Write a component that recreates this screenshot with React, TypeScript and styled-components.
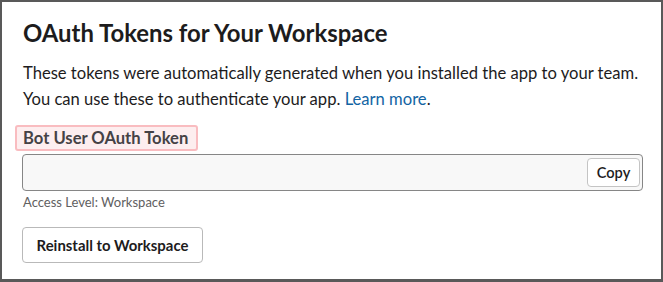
import React from 'react';
import styled, { createGlobalStyle } from 'styled-components';

const GlobalStyle = createGlobalStyle`
  html, body {
    margin: 0;
    padding: 0;
    background: #ffffff;
  }
  body {
    font-family: Lato, 'Noto Sans', sans-serif;
    color: #1d1c1d;
  }
`;

const App = () => {
  return (
    <>
      <GlobalStyle />
      <StyledFrame>
        <StyledTitle>OAuth Tokens for Your Workspace</StyledTitle>
        <StyledText>
          These tokens were automatically generated when you installed the app to your team.
          <br />
          You can use these to authenticate your app. <StyledLink href="#">Learn more</StyledLink>.
        </StyledText>
        <StyledLabel>Bot User OAuth Token</StyledLabel>
        <StyledField>
          <StyledInput readOnly value="" />
          <StyledCopy>Copy</StyledCopy>
        </StyledField>
        <StyledHint>Access Level: Workspace</StyledHint>
        <StyledButton>Reinstall to Workspace</StyledButton>
      </StyledFrame>
    </>
  );
};

const StyledFrame = styled.div`
  box-sizing: border-box;
  width: 663px;
  height: 282px;
  border: 2px solid #595959;
  border-bottom-width: 3px;
  padding: 15px 18px 0 20px;
  display: flex;
  flex-direction: column;
  align-items: flex-start;
`;

const StyledTitle = styled.h1`
  margin: 0 0 0 1px;
  font-size: 23.9px;
  font-weight: 700;
  line-height: 32px;
`;

const StyledText = styled.p`
  margin: 11px 0 0 1px;
  font-size: 16.6px;
  line-height: 26px;
`;

const StyledLink = styled.a`
  color: #1264a3;
  text-decoration: none;
`;

const StyledLabel = styled.div`
  margin: 13px 0 0 -7px;
  padding: 0 8px 0 6px;
  font-size: 16.6px;
  font-weight: 700;
  line-height: 22px;
  color: #454245;
  background: #fdeeef;
  border: 2px solid #f9bcc0;
  border-radius: 3px;
`;

const StyledField = styled.div`
  box-sizing: border-box;
  margin-top: 3px;
  width: 621px;
  height: 37px;
  display: flex;
  align-items: center;
  justify-content: space-between;
  padding: 0 2px 0 0;
  border: 1px solid #868686;
  border-radius: 4px;
  background: #f8f8f8;
`;

const StyledInput = styled.input`
  flex: 1;
  border: none;
  background: transparent;
  outline: none;
`;

const StyledCopy = styled.button`
  box-sizing: border-box;
  height: 29px;
  width: 53px;
  padding: 0;
  border: 1px solid #c4c4c4;
  border-radius: 4px;
  background: #ffffff;
  font-family: Lato, 'Noto Sans', sans-serif;
  font-size: 14.6px;
  font-weight: 600;
  color: #1d1c1d;
`;

const StyledHint = styled.div`
  margin: 3px 0 0 1px;
  font-size: 13px;
  line-height: 16px;
  color: #616061;
`;

const StyledButton = styled.button`
  box-sizing: border-box;
  margin-top: 17px;
  height: 36px;
  width: 181px;
  padding: 0;
  border: 1px solid #b9b9b9;
  border-radius: 4px;
  background: #ffffff;
  font-family: Lato, 'Noto Sans', sans-serif;
  font-size: 14.9px;
  font-weight: 700;
  color: #1d1c1d;
`;

export default App;
